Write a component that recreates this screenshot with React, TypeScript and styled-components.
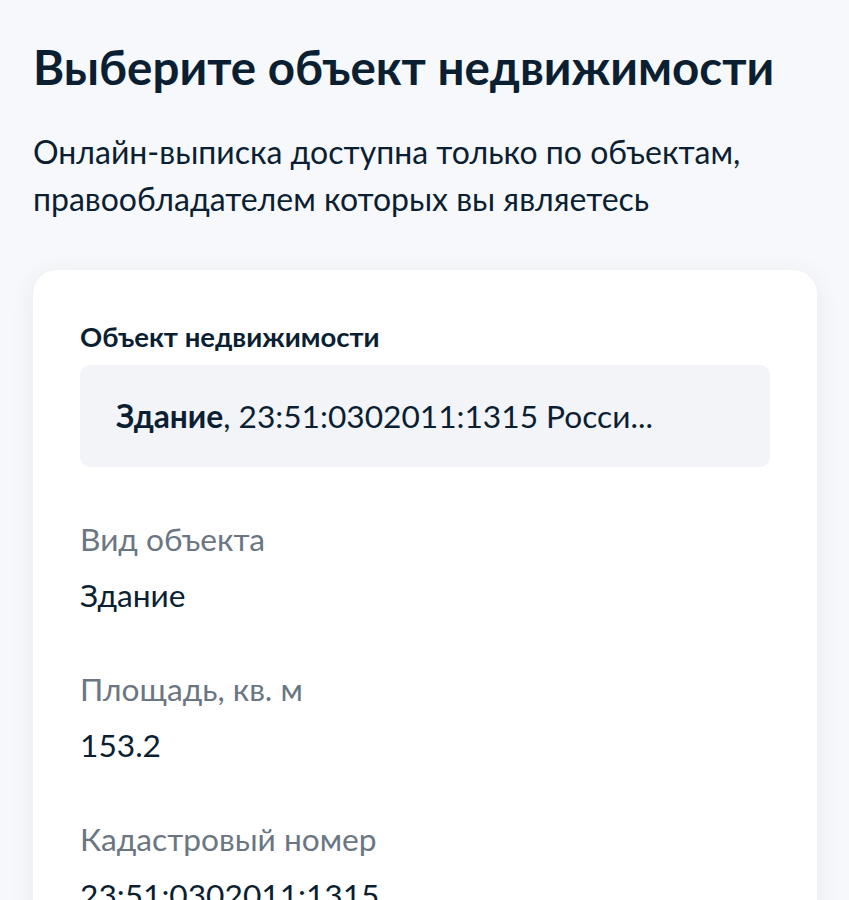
import React from 'react';
import styled, { createGlobalStyle } from 'styled-components';

const GlobalStyle = createGlobalStyle`
  html, body {
    margin: 0;
    padding: 0;
    background: #f7f8fb;
  }
  body {
    font-family: Lato, 'Noto Sans', sans-serif;
    color: #0b1f33;
  }
`;

type Field = { label: string; value: string };

const FIELDS: Field[] = [
  { label: 'Вид объекта', value: 'Здание' },
  { label: 'Площадь, кв. м', value: '153.2' },
  { label: 'Кадастровый номер', value: '23:51:0302011:1315' },
];

const App = () => {
  return (
    <Page>
      <GlobalStyle />
      <Title>Выберите объект недвижимости</Title>
      <Subtitle>
        Онлайн-выписка доступна только по объектам,
        <br />
        правообладателем которых вы являетесь
      </Subtitle>
      <Card>
        <SelectLabel>Объект недвижимости</SelectLabel>
        <Select>
          <b>Здание</b>, 23:51:0302011:1315 Росси...
        </Select>
        <Fields>
          {FIELDS.map((f) => (
            <FieldBox key={f.label}>
              <FieldLabel>{f.label}</FieldLabel>
              <FieldValue>{f.value}</FieldValue>
            </FieldBox>
          ))}
        </Fields>
      </Card>
    </Page>
  );
};

const Page = styled.div`
  padding: 38px 32px 40px 33px;
  height: 900px;
  overflow: hidden;
  box-sizing: border-box;
`;

const Title = styled.h1`
  margin: 0;
  font-size: 47.5px;
  line-height: 58px;
  font-weight: 700;
  color: #0b1f33;
`;

const Subtitle = styled.p`
  margin: 32px 0 0;
  font-size: 32px;
  line-height: 47px;
  font-weight: 400;
  color: #0b1f33;
`;

const Card = styled.div`
  margin-top: 48px;
  background: #fff;
  border-radius: 24px;
  box-shadow: 0 4px 24px rgba(40, 60, 110, 0.08);
  padding: 51px 47px 60px;
`;

const SelectLabel = styled.div`
  font-size: 27.5px;
  line-height: 32px;
  font-weight: 700;
  color: #0b1f33;
`;

const Select = styled.div`
  margin-top: 12px;
  height: 102px;
  box-sizing: border-box;
  padding: 0 36px;
  display: flex;
  align-items: center;
  background: #f2f4f8;
  border-radius: 10px;
  font-size: 31.7px;
  color: #0b1f33;
  b {
    font-weight: 700;
  }
`;

const Fields = styled.div`
  margin-top: 52px;
  display: flex;
  flex-direction: column;
  gap: 54px;
`;

const FieldBox = styled.div`
  display: flex;
  flex-direction: column;
  gap: 16px;
`;

const FieldLabel = styled.div`
  font-size: 31.7px;
  line-height: 40px;
  color: #6b7683;
`;

const FieldValue = styled.div`
  font-size: 31.7px;
  line-height: 40px;
  color: #0b1f33;
`;

export default App;
